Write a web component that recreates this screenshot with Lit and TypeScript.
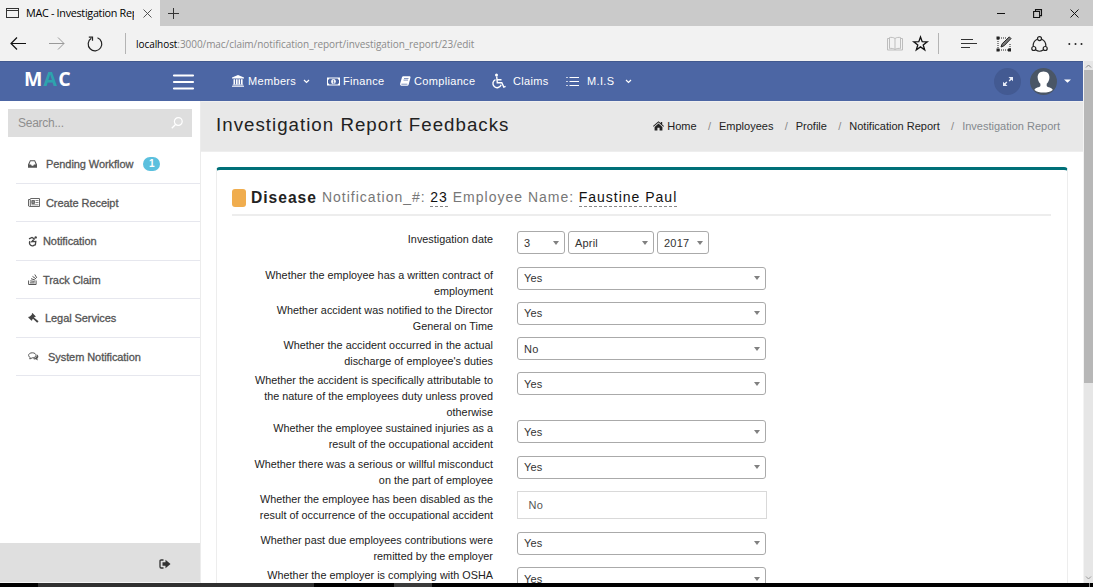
import { LitElement, html, css, svg } from "lit";
import { customElement } from "lit/decorators.js";

const icon = (w: number, h: number, body: unknown, cls = "") =>
  html`<svg class="ic ${cls}" width=${w} height=${h} viewBox="0 0 ${w} ${h}">${body}</svg>`;

const base = css`
  :host { display: block; font-family: "Liberation Sans", Arial, sans-serif; }
  * { box-sizing: border-box; }
  .ic { display: block; flex: none; overflow: visible; }
`;

@customElement("browser-bar")
class BrowserBar extends LitElement {
  static styles = [base, css`
    :host { height: 61px; font-family: "Open Sans", "Noto Sans", sans-serif; color: #222; }
    .tabs { display: flex; height: 26px; background: #cacaca; }
    .tab { display: flex; align-items: center; width: 160px; background: #f2f2f2; padding-left: 6px; }
    .title { width: 108px; margin-left: 7px; overflow: hidden; white-space: nowrap; font-size: 10.800px; line-height: 20px; letter-spacing: -0.3px; color: #000; }
    .x { margin-left: 9px; }
    .plus { margin: 8px 0 0 8px; }
    .win { display: flex; align-items: center; margin-left: auto; padding-right: 14px; gap: 28px; }
    .tools { display: flex; align-items: center; height: 35px; background: #f2f2f2; }
    .back { margin-left: 10px; }
    .fwd { margin-left: 23px; }
    .reload { margin-left: 22px; }
    .sep { width: 1px; height: 21px; background: #b4b4b4; }
    .s1 { margin-left: 22px; }
    .url { margin-left: 10px; font-size: 10px; color: #8a8a8a; white-space: nowrap; letter-spacing: -0.06px; }
    .url b { font-weight: 400; color: #000; }
    .right { display: flex; align-items: center; margin-left: auto; padding-right: 10px; }
    .star { margin-left: 10px; }
    .s2 { margin-left: 10px; }
    .hub { margin-left: 22px; }
    .note { margin-left: 19px; }
    .share { margin-left: 19px; }
    .more { margin-left: 20px; }
  `];
  render() {
    return html`
      <div class="tabs">
        <div class="tab">
          ${icon(13, 12, svg`<rect x=".5" y="1.500" width="12" height="9" fill="none" stroke="#333"/><path d="M1 3.500h11" stroke="#333"/>`)}
          <span class="title">MAC - Investigation Report</span>
          ${icon(9, 9, svg`<path d="M.5 .5l8 8M8.500 .5l-8 8" stroke="#444" stroke-width=".9"/>`, "x")}
        </div>
        ${icon(11, 11, svg`<path d="M5.500 0v11M0 5.500h11" stroke="#333"/>`, "plus")}
        <div class="win">
          ${icon(9, 9, svg`<path d="M1 4.500h8" stroke="#111"/>`)}
          ${icon(9, 9, svg`<path d="M.6 2.500h6v6h-6zM2.500 2.300V.6h6v6H6.800" fill="none" stroke="#111" stroke-width="1.100"/>`)}
          ${icon(9, 9, svg`<path d="M.5 .5l8 8M8.500 .5l-8 8" stroke="#111"/>`)}
        </div>
      </div>
      <div class="tools">
        ${icon(16, 13, svg`<path d="M16 6.500H1M7 .5l-6 6 6 6" fill="none" stroke="#111" stroke-width="1.200"/>`, "back")}
        ${icon(16, 13, svg`<path d="M0 6.500h15M9 .5l6 6-6 6" fill="none" stroke="#999"/>`, "fwd")}
        ${icon(16, 16, svg`<path d="M10.500 1.700a6.800 6.800 0 1 1-6.200.6" fill="none" stroke="#222" stroke-width="1.200"/><path d="M1.800 1.100h3.700v3.700" fill="none" stroke="#222" stroke-width="1.200"/>`, "reload")}
        <span class="sep s1"></span>
        <span class="url"><b>localhost</b>:3000/mac/claim/notification_report/investigation_report/23/edit</span>
        <div class="right">
          ${icon(16, 15, svg`<path d="M8 2.500v11M8 2.500C6.500 1.300 4 1.200 2.500 1.500v11C4 12.200 6.500 12.300 8 13.500c1.500-1.200 4-1.300 5.500-1V1.500C12 1.200 9.500 1.300 8 2.500zM2.500 2.500h-2v11.500h15V2.500h-2" fill="none" stroke="#bdbdbd"/>`)}
          ${icon(15, 15, svg`<path d="M7.500 1l1.700 4.700 5 .1-4 3.100 1.500 4.900-4.200-2.900-4.200 2.900 1.500-4.900-4-3.100 5-.1z" fill="none" stroke="#111" stroke-width="1.300"/>`, "star")}
          <span class="sep s2"></span>
          ${icon(16, 11, svg`<path d="M0 1.500h12M0 5.500h16M0 9.500h9" stroke="#333" stroke-width="1.100"/>`, "hub")}
          ${icon(16, 16, svg`<path d="M3 2h7M2 3v10M14 8v5M3 14h10" stroke="#222" stroke-dasharray="1 1" fill="none"/><path d="M.5 .5h3v3h-3zM.5 12.500h3v3h-3zM12 12.500h3v3h-3z" fill="#222"/><path d="M5 11l1.200-3.300L13.300.9l1.700 1.700L8.200 9.700z" fill="#777" stroke="#222"/>`, "note")}
          ${icon(17, 16, svg`<g fill="none" stroke="#222" stroke-width="1.200"><circle cx="8.500" cy="2.600" r="2"/><circle cx="2.800" cy="12.500" r="2"/><circle cx="14.200" cy="12.500" r="2"/><path d="M6.300 3.300C3.600 4.400 2 7 2.200 10.300M10.700 3.300c2.700 1.100 4.300 3.700 4.100 7M4.800 14c2.200 1.500 5.200 1.500 7.400 0"/></g>`, "share")}
          ${icon(15, 4, svg`<g fill="#222"><circle cx="1.300" cy="2" r="1"/><circle cx="7.500" cy="2" r="1"/><circle cx="13.500" cy="2" r="1"/></g>`, "more")}
        </div>
      </div>`;
  }
}

const chevron = (cls: string) => icon(7, 5, svg`<path d="M1 1l2.500 2.500L6 1" fill="none" stroke="#fff" stroke-width="1.200"/>`, cls);

@customElement("nav-bar")
class NavBar extends LitElement {
  static styles = [base, css`
    :host { height: 40px; background: #4c66a4; border-top: 1px solid #41598f; }
    .bar { display: flex; align-items: center; height: 38px; color: #fff; font-size: 11px; letter-spacing: .33px; }
    .logo { margin: -5px 0 0 24px; width: 49px; font: 700 19.500px/24px "Open Sans", sans-serif; letter-spacing: 1.200px; white-space: nowrap; }
    .logo i { font-style: normal; color: #2ea3ae; }
    .burger { margin: 1px 0 0 100px; }
    .item { display: flex; align-items: center; white-space: nowrap; }
    .i1 { margin-left: 38px; width: 95px; }
    .i2 { width: 73px; }
    .i3 { width: 91px; }
    .i4 { width: 75px; }
    .i5 { width: 66px; }
    .t { margin-left: 4px; }
    .t3 { margin-left: 3px; }
    .t6 { margin-left: 7px; }
    .t8 { margin-left: 8px; }
    .c { margin-left: auto; }
    .i1 .c { margin-right: 17px; }
    .right { display: flex; align-items: center; margin-left: auto; padding-right: 12px; }
    .round { display: grid; place-items: center; width: 27px; height: 27px; border-radius: 50%; background: #435a92; }
    .av { margin-left: 9px; background: #4a5666; overflow: hidden; }
    .caret { margin-left: 7px; }
  `];
  render() {
    return html`<div class="bar">
      <span class="logo">M<i>A</i>C</span>
      ${icon(21, 16, svg`<path d="M1 1.500h19M1 8h19M1 14.500h19" stroke="#fff" stroke-width="2.200" stroke-linecap="round"/>`, "burger")}
      <span class="item i1">${icon(12, 12, svg`<path fill="#fff" d="M6 0l6 2.500v1H0v-1zM1.500 4.200h1.600v5H1.500zM4 4.200h1.600v5H4zM6.500 4.200h1.600v5H6.500zM9 4.200h1.600v5H9zM.8 9.500h10.400v.8H.8zM0 10.700h12v1H0z"/>`)}<span class="t">Members</span>${chevron("c")}</span>
      <span class="item i2">${icon(13, 9, svg`<path fill="#fff" fill-rule="evenodd" d="M0 .5h13v8H0zM2.300 1.500a1.500 1.500 0 0 1-1.300 1.300v3.400a1.500 1.500 0 0 1 1.300 1.300h8.400A1.500 1.500 0 0 1 12 6.200V2.800a1.500 1.500 0 0 1-1.300-1.300z"/><ellipse cx="6.500" cy="4.500" rx="2.300" ry="2.600" fill="#fff"/><path d="M5.800 3.600l.8-.5v3M5.700 6.100h1.800" fill="none" stroke="#4c66a4" stroke-width=".7"/>`)}<span class="t3">Finance</span></span>
      <span class="item i3">${icon(11, 10, svg`<path fill="#fff" d="M3.300 .2h6.500q1 .2.700 1.200L8.700 8.600q-.2 1-1.200 1.200H1.200Q-.3 9.500.1 7.800L2 1.200Q2.300.3 3.300.2z"/><path d="M4 2.500h4.500M3.500 4.100h4.500M1.400 8.200h6" stroke="#4c66a4" stroke-width=".7"/>`)}<span class="t3">Compliance</span></span>
      <span class="item i4">${icon(15, 16, svg`<g fill="none" stroke="#fff" stroke-width="1.400"><path d="M4.500 6.600a4.200 4.200 0 1 0 5.600 5.200"/><path d="M5.700 3.500l.6 6.300h4.500l2 4.300 1.800-.8M6 6.800h4.500"/></g><circle cx="5.500" cy="1.900" r="1.500" fill="#fff"/>`)}<span class="t6">Claims</span></span>
      <span class="item i5">${icon(13, 11, svg`<path d="M3.500 1.500h9.500M3.500 5.500h9.500M3.500 9.500h9.500" stroke="#fff"/><path d="M.3 1.500h1.400M.3 5.500h1.400M.3 9.500h1.400" stroke="#fff"/>`)}<span class="t8">M.I.S</span>${chevron("c")}</span>
      <div class="right">
        <span class="round">${icon(10, 9, svg`<path fill="#e8edf8" d="M5.500 0H10v4.200L8.500 2.800 6.600 4.500 5.700 3.600 7.300 1.700zM4.500 9H0V4.800L1.500 6.200 3.400 4.500l.9.900-1.600 1.900z"/>`)}</span>
        <span class="round av">${icon(27, 27, svg`<path fill="#fff" d="M13.500 3.500c4 0 6.300 2.800 5.900 6.400-.2 2.400-1.300 4.600-2.700 5.900v2.200c.8 1.500 5.500 1.500 6 3.900C20.500 23.800 17 24.500 13.500 24.500S6.500 23.800 4.500 21.900c.5-2.400 5.100-2.400 5.900-3.900v-2.200c-1.400-1.300-2.500-3.500-2.700-5.900-.4-3.600 1.900-6.400 5.800-6.400z"/>`)}</span>
        ${icon(7, 4, svg`<path d="M0 .5h7L3.500 3.700z" fill="#fff"/>`, "caret")}
      </div>
    </div>`;
  }
}

@customElement("side-menu")
class SideMenu extends LitElement {
  static styles = [base, css`
    :host { display: flex; flex-direction: column; width: 201px; height: 482px; border-right: 1px solid #ececec; background: #fff; }
    .search { display: flex; align-items: center; justify-content: space-between; margin: 8px 8px 0; height: 28px; background: #dedede; color: #8e8e8e; font-size: 12px; padding: 0 9px 0 10px; letter-spacing: -0.25px; }
    .list { margin: 8px 0 0 16px; }
    .row { display: flex; align-items: center; height: 38.500px; padding-top: 1px; border-bottom: 1.500px solid #e6e7ee; color: #555; font-size: 11px; letter-spacing: -0.07px; -webkit-text-stroke: .3px #555; padding-left: 12px; white-space: nowrap; }
    .g5 { margin-left: 5px; } .g6 { margin-left: 6px; } .g9 { margin-left: 9px; }
    .badge { margin-left: 10px; width: 17px; height: 14px; border-radius: 7px; background: #5bc0de; color: #fff; font-size: 10px; font-weight: 700; line-height: 14px; text-align: center; -webkit-text-stroke: 0; }
    .foot { display: flex; align-items: center; justify-content: flex-end; margin-top: auto; height: 40px; background: #dfdfdf; padding: 2px 29px 0 0; border-bottom: 1px solid #f4f4f4; }
  `];
  render() {
    return html`
      <div class="search"><span>Search...</span>${icon(12, 12, svg`<circle cx="7.300" cy="4.500" r="3.900" fill="none" stroke="#fff" stroke-width="1.200"/><path d="M4.500 7.500L.8 11.200" stroke="#fff" stroke-width="1.300"/>`)}</div>
      <div class="list">
        <div class="row">${icon(9, 8, svg`<path fill="#555" fill-rule="evenodd" d="M2 .3h5L9 4.500v3.200H0V4.500zM2.600 1.300L1.300 4.500h1.800l.6 1.200h1.600l.6-1.200h1.800L6.400 1.300z"/>`)}<span class="g9">Pending Workflow</span><span class="badge">1</span></div>
        <div class="row">${icon(12, 9, svg`<path d="M2.300 .5h9.200v8H1.300L.5 8V1.500h1.800V8" fill="none" stroke="#555" stroke-width=".9"/><path d="M3.800 2.500h2.700v3H3.800z" fill="#888" stroke="#555" stroke-width=".8"/><path d="M7.500 2.500h3M7.500 4.500h3M3.500 6.800h7" stroke="#666" stroke-width=".8"/>`)}<span class="g6">Create Receipt</span></div>
        <div class="row">${icon(9, 11, svg`<g fill="none" stroke="#444" stroke-width="1.300"><path d="M2 5.200a2.900 2.900 0 1 0 4.800 3.400"/><path d="M1 2.900L4 1.500 6.300 2.900 3.700 5.700l4.100-.3-.5 4"/></g><circle cx="7.700" cy="1.400" r="1.200" fill="#444"/>`)}<span class="g6">Notification</span></div>
        <div class="row">${icon(9, 11, svg`<path d="M.6 6.500v4h7.500v-4M2 8.900h4.700M2.200 6.900l4.500.5M3 4.700l4.200 1.400M4.500 2.400l3.600 2.500M6.800.5l2 3.400" fill="none" stroke="#555"/>`)}<span class="g6">Track Claim</span></div>
        <div class="row">${icon(11, 10, svg`<path fill="#444" d="M4.500 .1L7.800 3.400 7 4.200 6.500 4 5.900 4.600l4.700 3.600-1.400 1.600L5 5.700l-.8.8.2.5-.8.700L.2 4.400l.8-.8.6.1L3.900 1.500 3.800.8z"/>`)}<span class="g6">Legal Services</span></div>
        <div class="row">${icon(11, 9, svg`<path d="M4.300 .8c2.200 0 3.700 1.100 3.700 2.500S6.500 5.800 4.300 5.800L1.800 7l.3-1.700C1.200 4.900.6 4.100.6 3.300.6 1.900 2.100.8 4.300.8z" fill="none" stroke="#555"/><path d="M9 2.600c1.800 1 1.800 3 .3 4l.5 1.900-2-1.200c-1.100.2-2.200 0-3-.5 2.500-.3 4.300-1.900 4.200-4.200z" fill="#555"/>`)}<span class="g9">System Notification</span></div>
      </div>
      <div class="foot">${icon(12, 10, svg`<path d="M4.500 1H2.200Q1 1 1 2.200v5.600Q1 9 2.200 9h2.300" fill="none" stroke="#333" stroke-width="1.300"/><path d="M3.500 3.300h3V.8L11.500 5 6.500 9.200V6.700h-3z" fill="#333"/>`)}</div>`;
  }
}

const questions: [string, string, string?][] = [
  ["Whether the employee has a written contract of\nemployment", "Yes"],
  ["Whether accident was notified to the Director\nGeneral on Time", "Yes"],
  ["Whether the accident occurred in the actual\ndischarge of employee's duties", "No"],
  ["Whether the accident is specifically attributable to\nthe nature of the employees duty unless proved\notherwise", "Yes"],
  ["Whether the employee sustained injuries as a\nresult of the occupational accident", "Yes"],
  ["Whether there was a serious or willful misconduct\non the part of employee", "Yes"],
  ["Whether the employee has been disabled as the\nresult of occurrence of the occupational accident", "No", "plain"],
  ["Whether past due employees contributions were\nremitted by the employer", "Yes"],
  ["Whether the employer is complying with OSHA", "Yes"],
];

@customElement("report-form")
class ReportForm extends LitElement {
  static styles = [base, css`
    :host { height: 433px; margin: 15px 15px 0 15px; border: 1px solid #ededed; border-top: 3px solid #007078; border-bottom: 0; border-radius: 4px 4px 0 0; padding: 0 16px 0 15px; background: #fff; overflow: hidden; }
    .head { display: flex; align-items: center; height: 46px; padding-top: 12px; border-bottom: 2px solid #ededed; font-size: 14px; letter-spacing: 1px; color: #777; white-space: nowrap; }
    .chip { width: 14px; height: 18px; border-radius: 3px; background: #f0ad4e; }
    .kind { margin-left: 5px; margin-top: -1px; font-size: 15.600px; color: #222; }
    .lbl { margin-left: 5px; line-height: 17px; border-bottom: 1px solid transparent; }
    .val { margin-left: 4.500px; color: #111; line-height: 17px; border-bottom: 1px dashed #888; }
    .form { padding-top: 15.300px; }
    .row { display: flex; align-items: flex-start; min-height: 35.300px; }
    .row.plain { min-height: 40.700px; }
    .q { width: 261px; text-align: right; font-size: 10.800px; letter-spacing: .03px; line-height: 16px; white-space: pre; color: #222; }
    .box { display: flex; align-items: center; justify-content: space-between; margin-left: 24px; width: 249px; height: 23px; border: 1px solid #aaa; border-radius: 3px; padding: 0 5px 0 6px; font-size: 11px; letter-spacing: .2px; color: #333; }
    .box.plain { width: 250px; height: 28px; border-color: #d9d9d9; border-radius: 0; padding-left: 10.500px; color: #555; }
    .dates { display: flex; gap: 3px; margin-left: 24px; }
    .dates .box { margin: 0; }
    .d { width: 48px; } .m { width: 86px; } .y { width: 52px; }
  `];
  arrow() { return icon(6, 4, svg`<path d="M0 0h6L3 4z" fill="#808080"/>`); }
  render() {
    return html`
      <div class="head"><span class="chip"></span><b class="kind">Disease</b><span class="lbl">Notification_#:</span><span class="val">23</span><span class="lbl">Employee Name:</span><span class="val">Faustine Paul</span></div>
      <div class="form">
        <div class="row"><span class="q">Investigation date</span><div class="dates">
          <span class="box d"><span>3</span>${this.arrow()}</span><span class="box m"><span>April</span>${this.arrow()}</span><span class="box y"><span>2017</span>${this.arrow()}</span>
        </div></div>
        ${questions.map(([q, a, kind]) => html`<div class="row ${kind ?? ""}"><span class="q">${q}</span><span class="box ${kind ?? ""}"><span>${a}</span>${kind ? "" : this.arrow()}</span></div>`)}
      </div>`;
  }
}

@customElement("app-root")
class AppRoot extends LitElement {
  static styles = [base, css`
    :host { width: 1093px; height: 587px; overflow: hidden; background: #fff; }
    .view { display: flex; height: 522px; overflow: hidden; }
    .page { width: 1083px; height: 522px; overflow: hidden; }
    .cols { display: flex; height: 482px; }
    .main { flex: 1; min-width: 0; }
    .title { display: flex; align-items: center; justify-content: space-between; height: 51px; background: #e8e8e8; border-bottom: 1px solid #eee; border-top: 1px solid #f0f0f0; padding: 0 23px 2px 15px; }
    h1 { margin: -2px 0 0; font-size: 18.700px; font-weight: 400; letter-spacing: 1.020px; color: #222; white-space: nowrap; }
    .crumbs { display: flex; align-items: center; font-size: 11px; color: #222; white-space: nowrap; }
    .crumbs .s { color: #888; margin: 0 8px 0 11.300px; }
    .crumbs .home { margin-left: 3px; }
    .crumbs .last { color: #84888e; }
    .scroll { display: flex; flex-direction: column; align-items: center; width: 10px; background: #e6e6e6; border-left: 1px solid #f3f3f3; }
    .scroll .up { margin: 3px 0 0; }
    .thumb { width: 9px; height: 313px; background: #b7b7b7; margin-top: 2px; }
    .down { margin: auto 0 3px; }
    .task { display: flex; height: 4px; background: #000; }
    .a { width: 38px; } .b { width: 276px; background: #303030; } .c { width: 80px; } .d { width: 38px; background: #3a3a3a; } .e { flex: 1; } .f { width: 1px; background: #888; margin-right: 3px; }
  `];
  render() {
    return html`
      <browser-bar></browser-bar>
      <div class="view">
        <div class="page">
          <nav-bar></nav-bar>
          <div class="cols">
            <side-menu></side-menu>
            <div class="main">
              <div class="title"><h1>Investigation Report Feedbacks</h1>
                <div class="crumbs">${icon(11, 10, svg`<path fill="#222" d="M5.500 .3l2.300 2V1h1.400v2.500L11 5.100l-.6.7-4.900-4.200L.6 5.800 0 5.100zM5.500 2.600l3.900 3.300v3.600H6.600V6.700H4.400v2.800H1.600V5.900z"/>`)}<span class="home">Home</span><span class="s">/</span><span>Employees</span><span class="s">/</span><span>Profile</span><span class="s">/</span><span>Notification Report</span><span class="s">/</span><span class="last">Investigation Report</span></div>
              </div>
              <report-form></report-form>
            </div>
          </div>
        </div>
        <div class="scroll">
          ${icon(5, 4, svg`<path d="M0 3.500L2.500 1 5 3.500" fill="none" stroke="#888"/>`, "up")}
          <div class="thumb"></div>
          ${icon(5, 4, svg`<path d="M0 .5L2.500 3 5 .5" fill="none" stroke="#999"/>`, "down")}
        </div>
      </div>
      <div class="task"><span class="a"></span><span class="b"></span><span class="c"></span><span class="d"></span><span class="e"></span><span class="f"></span></div>`;
  }
}
